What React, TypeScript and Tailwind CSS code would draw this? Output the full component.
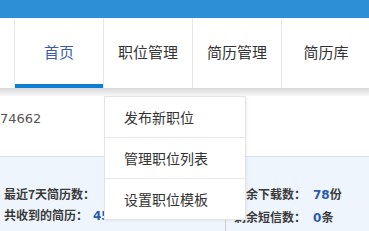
import React from "react";

const cjk = { fontFamily: '"Noto Sans CJK SC", "Noto Sans", sans-serif' };
const num = { fontFamily: '"DejaVu Sans", "Liberation Sans", sans-serif' };

const navItems = ["首页", "职位管理", "简历管理", "简历库"];

export default function App() {
  return (
    <div className="relative w-[369px] h-[231px] overflow-hidden bg-white" style={cjk}>
      <div className="h-[18px] bg-[#2d8fd5]" />
      <div className="flex h-[70px] pl-[14px] bg-white">
        {navItems.map((t, i) => (
          <div
            key={t}
            className={
              "relative flex w-[89px] shrink-0 items-center justify-center border-l border-[#e6e6e6] pb-[2px] text-[15px] " +
              (i === 0 ? "text-[#3a5ca8]" : "text-[#333333]")
            }
          >
            <span>{t}</span>
            {i === 0 && <div className="absolute bottom-0 left-0 right-0 h-[4px] bg-[#0e7dd2]" />}
          </div>
        ))}
      </div>
      <div className="h-[8px] bg-gradient-to-b from-[#d9d9d9] to-[#f7f7f7]" />
      <div className="flex h-[60px] items-center pb-[15px] text-[13px] text-[#555555]" style={num}>
        74662
      </div>
      <div className="flex h-[80px] border-t border-[#cfe0f5] bg-[#eef5fd] text-[12px] font-bold text-[#3b3b3b]">
        <div className="w-[226px] shrink-0 border-r border-[#cccccc] pl-[4px] pt-[26px] leading-[21px]">
          <div>最近7天简历数：</div>
          <div>
            共收到的简历：<span className="ml-[5px] text-[#2a5caa]" style={num}>45</span>
          </div>
        </div>
        <div className="pl-[8px] pt-[26px] leading-[21px]">
          <div>
            剩余下载数：<span className="ml-[7px] text-[#2a5caa]" style={num}>78</span>份
          </div>
          <div>
            剩余短信数：<span className="ml-[7px] text-[#2a5caa]" style={num}>0</span>条
          </div>
        </div>
      </div>
      <div className="absolute left-[104px] top-[96px] w-[142px] border border-[#e3e3e3] bg-white text-[14px] text-[#333333] shadow-[1px_1px_2px_rgba(0,0,0,0.06)]">
        {["发布新职位", "管理职位列表", "设置职位模板"].map((t, i) => (
          <div
            key={t}
            className={
              "flex items-center pl-[19px] " + (i < 2 ? "h-[41px] border-b border-[#e8e8e8]" : "h-[40px]")
            }
          >
            {t}
          </div>
        ))}
      </div>
    </div>
  );
}
